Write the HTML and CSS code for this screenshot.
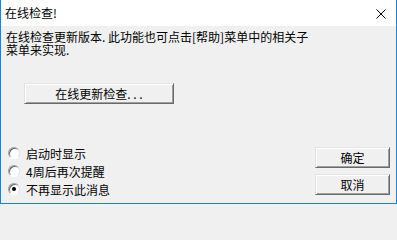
FILE: index.html
```html
<!DOCTYPE html>
<html lang="zh-CN">
<head>
<meta charset="utf-8">
<title>在线检查!</title>
<link rel="stylesheet" href="styles.css">
</head>
<body>
<div class="window">
  <div class="titlebar">
    <span class="title">在线检查!</span>
    <svg class="close" width="10" height="10" viewBox="0 0 10 10"><path d="M0.5 0.5 L9.5 9.5 M9.5 0.5 L0.5 9.5" stroke="#000" stroke-width="1" fill="none"/></svg>
  </div>
  <div class="content">
    <p class="msg">在线检查更新版本. 此功能也可点击[帮助]菜单中的相关子<br>菜单来实现.</p>
    <button class="btn btn-update">在线更新检查. . .</button>
    <div class="bottom">
      <div class="radios">
        <label class="radio"><span class="dot"></span><span>启动时显示</span></label>
        <label class="radio"><span class="dot"></span><span>4周后再次提醒</span></label>
        <label class="radio checked"><span class="dot"></span><span>不再显示此消息</span></label>
      </div>
      <div class="actions">
        <button class="btn btn-small">确定</button>
        <button class="btn btn-small">取消</button>
      </div>
    </div>
  </div>
</div>
</body>
</html>
```
FILE: styles.css
```css
* { box-sizing: border-box; }
html, body { margin: 0; padding: 0; background: #f0f0f0; }
body {
  font-family: "Noto Sans CJK SC", "Liberation Sans", sans-serif;
  font-size: 12px;
  color: #000;
}
.window {
  width: 397px;
  height: 204px;
  border: 1px solid #1883d7;
  border-top: none;
  display: flex;
  flex-direction: column;
  background: #f0f0f0;
}
.titlebar {
  height: 26px;
  background: #fff;
  display: flex;
  align-items: center;
  justify-content: space-between;
  padding: 0 10px 0 4px;
}
.title { line-height: 12px; }
.close { display: block; margin-top: 1px; }
.content {
  flex: 1;
  display: flex;
  flex-direction: column;
  padding: 4px 6px 0 5px;
}
.msg {
  margin: 0;
  line-height: 13px;
}
.btn {
  font-family: inherit;
  font-size: 12px;
  line-height: 12px;
  color: #000;
  background: #f0f0f0;
  border: 1px solid;
  border-color: #e3e3e3 #696969 #696969 #e3e3e3;
  box-shadow: inset 1px 1px #fff, inset -1px -1px #a0a0a0;
  padding: 0;
  margin: 0;
}
.btn-update {
  width: 150px;
  height: 21px;
  margin: 27px 0 0 18px;
  align-self: flex-start;
}
.bottom {
  margin-top: auto;
  display: flex;
  justify-content: space-between;
  align-items: flex-start;
  padding-bottom: 5px;
}
.radios {
  display: flex;
  flex-direction: column;
}
.radio {
  display: flex;
  align-items: center;
  height: 18px;
  gap: 6px;
}
.dot {
  width: 12px;
  height: 12px;
  margin-left: 2px;
  border-radius: 50%;
  background: #fff;
  border: 1px solid;
  border-color: #a0a0a0 #e3e3e3 #fff #a0a0a0;
  box-shadow: inset 1px 1px #696969;
  position: relative;
}
.checked .dot::after {
  content: "";
  position: absolute;
  left: 3px;
  top: 3px;
  width: 4px;
  height: 4px;
  border-radius: 50%;
  background: #000;
}
.actions {
  display: flex;
  flex-direction: column;
  gap: 6px;
  padding-top: 3px;
}
.btn-small {
  width: 75px;
  height: 21px;
}
```
